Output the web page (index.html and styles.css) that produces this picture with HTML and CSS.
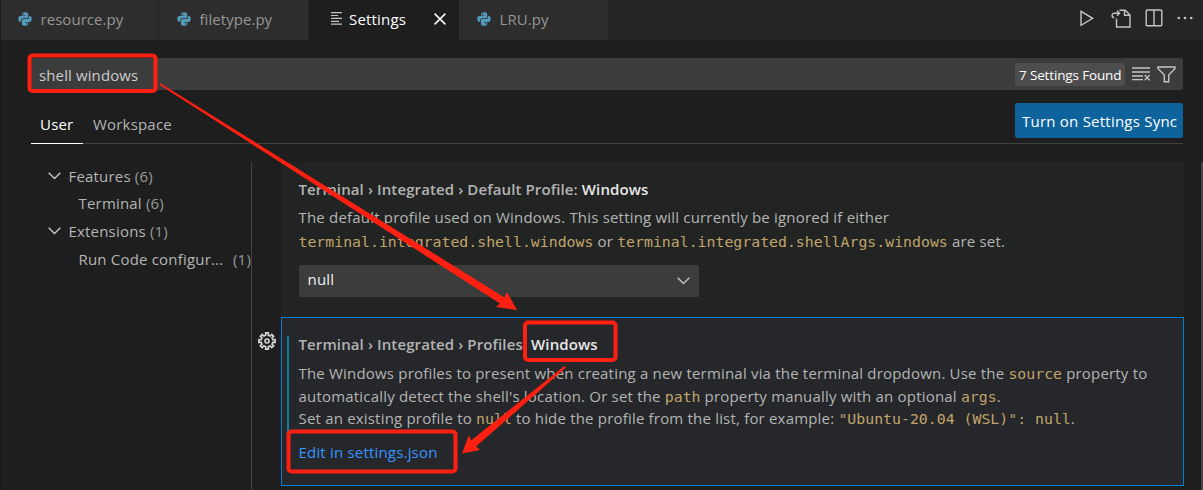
FILE: index.html
```html
<!DOCTYPE html>
<html lang="en">
<head>
<meta charset="utf-8">
<title>Settings</title>
<link rel="stylesheet" href="styles.css">
</head>
<body>
<svg width="0" height="0" class="defs">
  <symbol id="python" viewBox="0 0 14 14">
    <path fill="#519aba" d="M6.8.3C4.6.3 4 1.2 4 2.1v1.4h3.4v.6H2.3C1 4.1.3 5.2.3 7c0 1.900.8 2.800 1.800 2.800h1.100V8.300c0-1.100.9-2 2-2h3.400c.9 0 1.600-.7 1.600-1.600V2.100C10.200.9 9 .3 6.800.3zM5.300 1.300a.65.65 0 1 1 0 1.300.65.65 0 0 1 0-1.300z"/>
    <path fill="#519aba" d="M11 4.100h.9c1.200 0 1.800 1.200 1.800 2.900s-.7 2.900-1.900 2.900H7v.6h3.300v1.400c0 1.100-1.200 1.800-3.200 1.800s-3.200-.7-3.200-1.800V8.700c0-.9.700-1.600 1.600-1.600h3.400C10.100 7.100 11 6.300 11 5.200zM8.900 11.300a.65.65 0 1 0 0 1.300.65.65 0 0 0 0-1.300z"/>
  </symbol>
</svg>
<div class="window">
  <header class="tabs">
    <div class="tab"><svg class="py"><use href="#python"/></svg><span>resource.py</span></div>
    <div class="tab"><svg class="py"><use href="#python"/></svg><span>filetype.py</span></div>
    <div class="tab active">
      <svg class="lines" viewBox="0 0 12 13" fill="none" stroke="#c5c5c5" stroke-width="1.200"><path d="M0 .6h11M0 3.500h7M0 6.400h11M0 9.300h8M0 12.200h11"/></svg>
      <span>Settings</span>
      <svg class="close" viewBox="0 0 12 12" fill="none" stroke="#fff" stroke-width="1.500"><path d="M.6.6l10.800 10.800M11.400.6L.6 11.400"/></svg>
    </div>
    <div class="tab"><svg class="py"><use href="#python"/></svg><span>LRU.py</span></div>
    <div class="actions">
      <svg width="14" height="17" viewBox="0 0 14 17" fill="none" stroke="#c5c5c5" stroke-width="1.400"><path d="M1 1.300v14l11.700-7z"/></svg>
      <svg width="20" height="19" viewBox="0 0 20 19" fill="none" stroke="#c5c5c5" stroke-width="1.400"><path d="M8.500 1.200h5.700L19 6v12H5.500V9.500M13.500 1.500V6.300h5M8 4.300H3.200a2.100 2.100 0 0 0 0 4.200M6 1.800l2.500 2.500L6 6.800"/></svg>
      <svg width="18" height="18" viewBox="0 0 18 18" fill="none" stroke="#c5c5c5" stroke-width="1.400"><rect x="1.200" y="1" width="15.600" height="15.800" rx="1"/><path d="M9 1v16"/></svg>
      <svg width="16" height="4" viewBox="0 0 16 4" fill="#c5c5c5"><circle cx="1.800" cy="2" r="1.300"/><circle cx="8" cy="2" r="1.300"/><circle cx="14.200" cy="2" r="1.300"/></svg>
    </div>
  </header>
  <section class="head">
    <div class="search">
      <span class="query">shell windows</span>
      <span class="count">7 Settings Found</span>
      <svg class="clear" width="19" height="14" viewBox="0 0 19 14" fill="none" stroke="#c5c5c5" stroke-width="1.300"><path d="M0 1h18M0 5h18M0 9h11M0 12.700h11M12.700 8l5 5.200M17.700 8l-5 5.200"/></svg>
      <svg width="19" height="17" viewBox="0 0 19 17" fill="none" stroke="#c5c5c5" stroke-width="1.400"><path d="M1 1h17v1.500L11.700 9v6.700H7.300V9L1 2.500z"/></svg>
    </div>
    <div class="scope">
      <div class="scope-tab on">User</div>
      <div class="scope-tab">Workspace</div>
      <button class="sync">Turn on Settings Sync</button>
    </div>
  </section>
  <main class="body">
    <nav class="toc">
      <div class="group"><svg class="chev" viewBox="0 0 13 8"><path d="M.7.8l5.800 5.800L12.300.8"/></svg><span>Features <i>(6)</i></span></div>
      <div class="item"><span>Terminal <i>(6)</i></span></div>
      <div class="group"><svg class="chev" viewBox="0 0 13 8"><path d="M.7.8l5.800 5.800L12.300.8"/></svg><span>Extensions <i>(1)</i></span></div>
      <div class="item"><span>Run Code configur...</span><i class="far">(1)</i></div>
    </nav>
    <div class="gutter">
      <svg width="18" height="18" viewBox="0 0 18 18" fill="none" stroke="#d8d8d8" stroke-width="1.600"><path d="M7.740 3.210L7.640.910 10.360.910 10.260 3.210 12.210 4.010 13.760 2.320 15.680 4.240 13.990 5.790 14.790 7.740 17.090 7.640 17.090 10.360 14.790 10.260 13.990 12.210 15.680 13.760 13.760 15.680 12.210 13.990 10.260 14.790 10.360 17.090 7.640 17.090 7.740 14.790 5.790 13.990 4.240 15.680 2.320 13.760 4.010 12.210 3.210 10.260.910 10.360.910 7.640 3.210 7.740 4.010 5.790 2.320 4.240 4.240 2.320 5.790 4.010z"/><circle cx="9" cy="9" r="2"/></svg>
    </div>
    <div class="list">
      <article class="row">
        <h3>Terminal › Integrated › Default Profile: <b>Windows</b></h3>
        <p>The default profile used on Windows. This setting will currently be ignored if either</p>
        <p class="keys"><code>terminal.integrated.shell.windows</code> or <code>terminal.integrated.shellArgs.windows</code> are set.</p>
        <div class="select"><span>null</span><svg class="chev" viewBox="0 0 13 8"><path d="M.7.8l5.800 5.800L12.300.8"/></svg></div>
      </article>
      <article class="row focused">
        <div class="modified">
          <h3>Terminal › Integrated › Profiles: <b>Windows</b></h3>
          <p>The Windows profiles to present when creating a new terminal via the terminal dropdown. Use the <code>source</code> property to</p>
          <p>automatically detect the shell's location. Or set the <code>path</code> property manually with an optional <code>args</code>.</p>
          <p>Set an existing profile to <code>null</code> to hide the profile from the list, for example: <code>"Ubuntu-20.04 (WSL)": null</code>.</p>
        </div>
        <a class="edit">Edit in settings.json</a>
      </article>
    </div>
  </main>
  <svg class="marks" viewBox="0 0 1203 490">
    <g fill="none" stroke="#ff2012" stroke-width="4">
      <rect x="29.500" y="55.500" width="126" height="35.500" rx="3"/>
      <rect x="525" y="322.500" width="90.500" height="37.500" rx="3"/>
      <rect x="288.500" y="431.500" width="167" height="40" rx="3"/>
    </g>
    <g fill="#ff2012">
      <path d="M160.500 83.300L504.500 297.500 507 292 517 310 496 307 500 303.500 159.500 84.700z"/>
      <path d="M566 367.500L476 446.500 480 450 462 453.500 469 435 471 440.500 564.500 366z"/>
    </g>
  </svg>
</div>
</body>
</html>
```
FILE: styles.css
```css
* { box-sizing: border-box; }
body { margin: 0; background: #1e1e1e; color: #b4b4b4; font: 15px/22px "Open Sans", "Noto Sans", sans-serif; letter-spacing: .19px; overflow: hidden; }
i { font-style: normal; color: #999; }
span { white-space: pre; }
.defs { position: absolute; }
.window { position: relative; width: 1203px; height: 490px; display: flex; flex-direction: column; border-left: 1px solid #191919; }
.window::after { content: ""; position: absolute; right: 0; top: 162px; bottom: 0; width: 2px; background: #424242; }
.tabs { height: 40px; flex: none; display: flex; background: #252526; letter-spacing: .05px; }
.tab { width: 150px; display: flex; align-items: center; padding: 0 0 3px 18px; background: #2d2d2d; border-right: 1px solid #252526; color: #969696; }
.tab:first-child { width: 158px; padding-left: 17px; }
.tab > span { padding-top: 1px; }
.active { background: #1e1e1e; color: #fff; padding-left: 22px; border-color: #1e1e1e; letter-spacing: .19px; }
.py { width: 14px; height: 14px; margin-right: 8.500px; }
.lines { width: 12px; height: 13px; margin-right: 6px; }
.close { width: 12px; height: 12px; margin-left: auto; margin-right: 12px; }
.actions { margin-left: auto; margin-right: 10.500px; display: flex; align-items: center; gap: 14px; padding-bottom: 4px; }
.actions svg:nth-child(1) { margin-right: 3px; }
.head { padding: 18px 20px 0 27px; height: 104px; flex: none; }
.search { height: 32px; display: flex; align-items: center; background: #3c3c3c; color: #ccc; padding: 0 7px 0 11px; border-radius: 2px; }
.query { margin-right: auto; padding-top: 1px; letter-spacing: .12px; }
.count { height: 23px; width: 110px; background: #4d4d4d; border-radius: 2px; color: #fff; font-size: 13.500px; letter-spacing: -.15px; line-height: 24px; padding-left: 4px; margin-right: 7px; }
.clear { margin-right: 6px; }
.scope { height: 54px; margin-left: 3px; display: flex; align-items: flex-end; border-bottom: 1px solid #414141; }
.scope-tab { height: 31px; padding: 0 9px; margin-bottom: -1px; }
.scope-tab.on { width: 52px; margin-right: 1px; color: #fff; border-bottom: 1px solid #fff; }
.sync { margin-left: auto; margin-bottom: 5px; width: 168px; height: 35px; padding: 1px 0 0 7px; text-align: left; white-space: nowrap; border: 0; border-radius: 2px; background: #0e639c; color: #fff; font: inherit; letter-spacing: .23px; }
.body { flex: 1; display: flex; margin-top: 18px; min-height: 0; }
.toc { width: 251px; border-right: 1px solid #414141; padding-left: 47px; }
.group, .item { height: 27.600px; line-height: 28px; display: flex; align-items: center; }
.item { padding-left: 30.500px; }
.far { margin-left: auto; }
.chev { width: 13px; height: 8px; margin-right: 7.500px; fill: none; stroke: #c5c5c5; stroke-width: 1.400; }
.gutter { width: 29px; padding: 170px 0 0 6px; }
.list { width: 903px; }
.row { height: 155px; background: #222423; padding: 16px 0 0 17.500px; }
.focused { height: 169px; background: #25272a; border: 1px solid #007fd4; padding: 18px 0 0 5px; }
.modified { border-left: 2px solid #0c7d9d; padding-left: 9.500px; height: 97px; }
h3 { margin: 0; font-size: 15px; line-height: 22px; font-weight: 600; height: 28px; letter-spacing: .11px; white-space: pre; }
.modified h3 { height: 26px; line-height: 17px; }
h3 b { color: #e8e8e8; font-weight: 600; }
p { margin: 0; height: 23px; line-height: 23px; white-space: pre; }
.modified p { height: 22.500px; }
.keys { height: 24px; line-height: 25px; }
code { font: 14.850px "DejaVu Sans Mono", monospace; letter-spacing: 0; color: #c1a46a; }
.select { width: 400px; height: 32px; margin: 12px 0 0 .5px; background: #3c3c3c; border-radius: 2px; display: flex; align-items: center; justify-content: space-between; padding: 0 2px 0 8.500px; color: #f0f0f0; }
.select span { padding-bottom: 4px; }
.edit { display: block; padding: 8px 0 0 11.500px; color: #3794ff; }
.marks { position: absolute; left: -1px; top: 0; width: 1203px; height: 490px; }
```
